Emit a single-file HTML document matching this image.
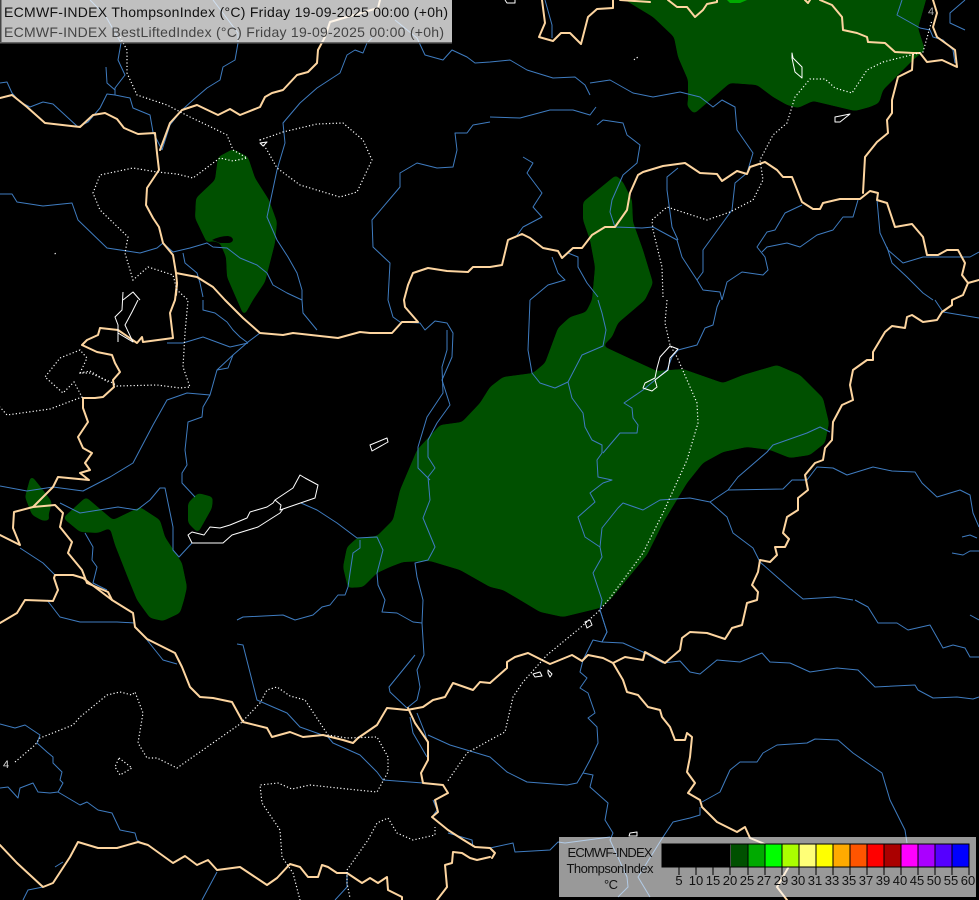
<!DOCTYPE html>
<html lang="en">
<head>
<meta charset="utf-8">
<title>ECMWF-INDEX ThompsonIndex</title>
<style>
html,body{margin:0;padding:0;background:#000;width:979px;height:900px;overflow:hidden}
svg{display:block;position:absolute;left:0;top:0}
text{font-family:"Liberation Sans",Arial,sans-serif}
.g{fill:#005000;stroke:none}
.r{fill:none;stroke:#3f7cc0;stroke-width:1;stroke-linejoin:round}
.b{fill:none;stroke:#fdd5a0;stroke-width:2;stroke-linejoin:round;stroke-linecap:round}
.d{fill:none;stroke:#fff;stroke-width:1.2;stroke-dasharray:1.2 2.2;stroke-linecap:butt}
.l{fill:none;stroke:#fff;stroke-width:1;stroke-linejoin:round}
</style>
</head>
<body>
<svg width="979" height="900" viewBox="0 0 979 900" xmlns="http://www.w3.org/2000/svg">
<defs>
<filter id="sm" filterUnits="userSpaceOnUse" x="0" y="-20" width="979" height="940" color-interpolation-filters="sRGB">
<feGaussianBlur stdDeviation="2.2"/>
<feColorMatrix type="matrix" values="1 0 0 0 0 0 1 0 0 0 0 0 1 0 0 0 0 0 14 -6.5"/>
</filter>
</defs>
<rect width="979" height="900" fill="#000"/>
<!-- green fields -->
<g filter="url(#sm)">
<path class="g" d="M612 -10L625 0L653 17L674 37L678 57L688 80L688 100L687 106L694 114L730 83L757 85L773 97L787 105L798 108L813 101L855 111L870 107L879 103L883 90L913 60L925 50L918 28L926 0L928 -10Z"/>
<path class="g" d="M233 149L248 157L255 178L269 200L277 222L275 243L265 282L253 300L244 316L237 300L227 277L226 257L220 243L212 241L207 243L195 218L196 198L215 180L218 157Z"/>
<path class="g" d="M616 175L623 182L632 200L633 222L643 250L653 283L645 300L618 323L612 337L603 346L633 360L657 371L683 369L723 383L743 375L777 365L800 375L823 398L829 423L825 443L810 455L790 458L770 450L747 447L723 452L703 463L687 483L663 523L647 555L610 600L600 608L563 617L540 612L520 600L503 590L490 587L460 570L430 561L403 562L390 567L377 573L363 587L348 588L343 567L347 547L357 538L377 536L393 520L400 490L417 450L440 425L462 422L480 403L490 387L503 377L533 373L545 363L558 328L570 317L586 312L592 300L595 267L590 240L583 220L583 202Z"/>
<path class="g" d="M31 475L43 490L52 502L48 517L52 520L43 521L32 515L25 497Z"/>
<path class="g" d="M63 518L86 497L113 520L140 507L160 520L165 537L182 563L187 587L184 600L180 613L163 621L150 618L137 600L128 578L115 545L110 528L98 533L80 532Z"/>
<path class="g" d="M198 493L213 497L212 508L198 533L188 523L188 503Z"/>
</g>
<path d="M727 0H747L740 3H730Z" fill="#00aa00"/>
<path d="M212 240Q220 236 228 236Q233 237 233 240Q232 243 228 243H220Z" fill="#000"/>
<!-- rivers -->
<g class="r">
<path d="M0 83L7 82L12 93L20 102L30 107L43 102L53 104L78 127L88 122L100 108L107 94L115 95L115 88L125 75L118 60L121 43L105 15L90 0"/>
<path d="M106 67L107 83L115 90M115 95L130 98L133 108L150 115L153 132L162 150"/>
<path d="M213 0L238 33L238 43L235 60L223 67L220 80L207 88L193 100L182 110L170 125L162 150"/>
<path d="M372 38L367 43L363 53L355 50L347 55L340 73L317 88L300 103L283 123L285 143L277 170L270 203L267 217L277 240L288 257L297 273L302 290L302 300L303 313L317 330"/>
<path d="M267 273L273 285L287 293L302 300"/>
<path d="M0 194L12 194L17 202L43 206L72 203L78 220L107 248L140 253L157 248L163 243L173 252L190 248L207 243L213 247L227 248L240 258L257 265L267 273"/>
<path d="M183 253L185 263L197 273L200 283L203 297"/>
<path d="M490 122L473 125L467 133L455 133L457 150L453 167L437 168L417 163L400 173L400 187L372 220L373 247L390 263L388 300L393 317L400 322L420 323L425 330L435 321L447 323L453 333L452 357L442 380L450 405L437 423L428 440L428 457L435 468L428 477L430 500L423 518L435 547L428 560L415 563L417 577L423 600L422 623"/>
<path d="M447 330L447 350L442 367L443 393L433 408L427 417L418 447L418 468L430 480"/>
<path d="M395 20L417 38L425 55L443 60L452 50L467 57L475 63L490 62L510 60L527 70L553 78L575 77L585 85L590 95"/>
<path d="M590 83L610 80L633 93L653 97L680 92L700 97L713 107L722 100L735 107L737 130L753 153L747 173L735 183L732 210L703 250L703 272L697 280L703 290L720 292L722 300"/>
<path d="M490 117L520 118L550 110L573 110L590 115L596 107"/>
<path d="M597 125L603 120L623 123L627 135L640 145L637 163L623 175L612 200L610 212L615 227L642 228L653 227L677 240L682 257L697 280"/>
<path d="M523 157L533 163L527 173L542 193L533 207L542 217L523 227L515 238"/>
<path d="M678 168L667 177L667 190L672 227L678 240"/>
<path d="M802 205L785 213L775 230L767 232L757 247L765 257L768 270L763 275L742 272L727 282L722 300"/>
<path d="M858 200L853 217L843 217L833 230L817 235L800 247L787 243L767 247L762 252"/>
<path d="M877 200L880 233L888 250L903 263L923 257L960 257L970 257L979 252"/>
<path d="M887 247L892 263L907 277L923 293L933 300"/>
<path d="M552 257L558 273L565 280L548 285L530 300"/>
<path d="M568 253L578 257L578 267L587 283L598 297"/>
<path d="M902 0L897 15L920 28L930 30L933 37L943 40L953 50L955 63"/>
<path d="M965 0L950 13L950 23L965 30"/>
<path d="M545 0L552 25L552 38"/>
<path d="M530 300L528 350L532 373L540 383L555 388L568 382L582 355L603 346L606 330L602 313L598 300"/>
<path d="M568 382L572 398L583 413L585 427L592 440L602 445L602 453L597 460L598 477L612 480L603 483L590 493L595 502L578 517L585 537L600 547L602 557L593 573L602 600L600 610L607 632L602 642"/>
<path d="M603 453L620 433L637 433L638 425L633 418L632 408L624 403L643 390L667 370L672 357L678 350L697 345L705 328L713 325L717 307L720 300"/>
<path d="M600 547L602 528L618 508L623 503L643 510L660 500L690 498L710 502L728 490L738 477L767 452L773 445L807 433L820 427L830 432"/>
<path d="M728 490L783 489L792 480L807 480L817 467L833 468L847 475L873 467L892 471L915 472L922 483L937 497L960 490L970 495L973 513L979 527"/>
<path d="M710 502L727 517L733 533L753 548L760 562L777 577L792 590L803 599L835 597L853 600"/>
<path d="M962 537L970 535L977 538M952 553L963 555L970 551L979 551"/>
<path d="M935 300L943 312L979 318"/>
<path d="M0 486L27 491L53 487L83 491L110 477L133 463L153 425L167 400L187 393L210 395L217 370L233 355L248 342L260 333"/>
<path d="M210 395L203 407L202 417L188 422L185 450L187 465L182 473L182 483L195 497"/>
<path d="M167 343L183 343L203 337L230 347L248 343M233 355L228 368L217 370"/>
<path d="M203 300L203 310L215 313L227 322L233 330L240 337L248 343"/>
<path d="M60 503L80 513L118 507L137 510L150 500L160 488L165 488L173 527L173 550L179 557L192 543"/>
<path d="M85 533L93 547L92 560L97 567L93 583L107 590"/>
<path d="M20 548L43 563L55 575"/>
<path d="M301 503L317 510L337 523L357 538L377 537L383 550L377 573L378 585L385 600L382 612L397 613L413 622L422 623"/>
<path d="M360 540L360 548L353 553L350 573L348 587L345 595L338 595L330 605L322 607L313 615L295 620L283 615L243 617L237 620"/>
<path d="M47 600L60 617L80 622L117 622L135 623"/>
<path d="M147 640L163 660L177 664"/>
<path d="M422 623L424 655L417 670L420 687L417 700L407 708M415 655L389 687L390 692L407 708"/>
<path d="M410 717L413 733L427 757M417 713L425 733L428 745"/>
<path d="M428 735L450 745L490 757L507 772L527 782L567 785L577 783L583 773L590 760L598 743L597 727L588 718L595 713L588 693L580 688L587 678L580 672L583 660L593 640L602 642"/>
<path d="M583 773L593 775L590 787L608 803L605 820L613 833L610 840L627 877L628 887L618 897"/>
<path d="M600 610L607 632L602 642L623 643L643 652L663 663L680 661L690 672L700 674L717 660L740 662L762 653L770 662L790 663L810 672L837 668L858 670L875 687L915 685L918 690L933 698L957 697L973 699L979 697"/>
<path d="M855 600L868 607L878 623L897 623L908 630L930 625L943 648L953 645L965 648L970 657L979 657M970 615L979 620"/>
<path d="M702 802L720 792L730 770L740 762L757 762L763 753L777 745L807 743L815 739L838 740L853 753L882 773L890 800L905 830L907 843"/>
<path d="M700 807L700 815L690 818L673 822L663 837L638 877L650 897"/>
<path d="M490 848L513 843L515 852L550 850L558 842L565 843L610 837"/>
<path d="M0 724L15 728L25 725L40 735L37 743L47 752L53 757L53 763L62 772L60 780L63 783L58 792L80 805L87 802L98 810L112 813L120 830L135 833L137 840L145 845"/>
<path d="M0 788L8 787L18 798L20 788L33 783L38 792L50 793L58 792"/>
<path d="M237 644L243 645L257 700L273 707L287 713L300 727L328 737L333 743L360 755L377 772L383 780L423 783"/>
<path d="M23 900L28 890L43 887M55 867L63 862M217 872L202 900M335 900L347 887L347 873"/>
<path d="M433 800L437 810L432 817M448 833L472 840L473 847"/>
</g>
<!-- borders -->
<g class="b">
<path d="M0 98L12 95L27 107L45 123L80 127L93 115L105 113L117 119L124 128L138 134L155 133L157 153L159 170L147 188L146 205L153 218L159 227L163 243L173 255L176 273L197 277L213 287L225 300L243 318L260 333L283 335L293 333L338 338L360 332L370 333L392 333L402 322L418 322L405 307L404 300L408 285L413 273L428 268L447 271L468 272L473 267L490 267L502 265L508 240L522 234L530 238L543 248L558 251L562 258L573 248L582 248L592 235L605 227L615 227L627 210L630 193L638 175L643 172L663 166L685 163L700 173L717 174L722 181L737 171L747 174L750 167L765 162L777 170L783 177L792 177L802 202L813 209L820 209L823 203L840 199L860 199L870 191L878 193L877 200L887 203L895 227L912 224L923 237L927 255L938 255L947 250L958 250L965 263L962 275L968 283L979 280"/>
<path d="M968 283L963 295L952 300L952 305L942 312L937 320L923 322L912 315L907 317L905 328L892 326L885 332L873 352L873 360L867 360L853 370L850 385L853 400L842 405L833 422L832 440L825 448L823 460L815 463L805 475L808 490L798 498L798 510L787 517L783 533L789 539L785 547L775 547L777 555L770 562L760 560L758 572L752 585L758 592L757 600L747 603L742 625L732 628L725 639L707 633L690 632L682 638L680 650L665 663L645 652L643 660L625 657L613 663L603 658L588 655L582 661L572 655L550 664L528 653L515 657L507 662L507 668L490 683L480 682L473 690L453 683L445 697L433 700L423 707L407 710L387 708L377 725L358 738L353 743L343 740L323 735L303 737L290 732L272 737L267 728L243 722L232 702L213 698L200 697L190 687L182 667L175 653L147 639L135 627L133 613L112 600L83 578L73 575L55 575L54 578L58 590L53 601L25 600L17 613L0 623"/>
<path d="M408 708L415 723L428 742L428 760L421 773L423 783L443 785L448 793L435 800L438 812L432 817L448 830L462 839L475 847L490 848L495 853L492 858"/>
<path d="M490 857L477 860L470 858L462 853L453 852L452 863L445 865L447 887L437 900"/>
<path d="M0 845L17 863L43 887L53 883L70 857L78 842L98 848L117 848L138 842L148 845L173 863L185 856L197 865L208 860L217 870L240 867L267 885L277 878L290 864L300 867L308 877L318 877L322 865L328 867L337 873L347 873L362 883L370 878L378 883L387 877L388 890L402 897L402 900"/>
<path d="M318 50L325 37L330 22L347 17L378 8L380 0"/>
<path d="M318 50L317 63L308 72L297 75L283 90L272 93L265 97L260 107L240 115L230 109L218 115L197 105L182 110L170 123L160 150"/>
<path d="M542 0L545 23L539 37L553 41L561 33L570 33L581 44L588 17L597 9L613 8L613 0"/>
<path d="M620 0L650 2M668 0L677 7L687 7L695 17L703 10L707 4L717 2L717 0M805 0L808 3L810 0"/>
<path d="M820 0L832 5L842 17L843 30L857 33L867 37L868 42L885 43L895 52L913 53L920 53L927 62L942 60L957 67L955 50L937 37L933 27L937 13L933 0"/>
<path d="M913 53L912 70L898 77L892 100L892 113L887 120L888 133L877 142L865 157L863 193"/>
<path d="M177 283L175 300L170 313L173 338L143 342L142 337L137 343L118 330L100 328L98 335L87 340L82 345L97 352L112 355L115 363L120 372L113 380L114 387L103 397L95 398L83 398L83 408L88 422L78 437L83 448L92 453L85 463L90 470L80 473L89 480L58 477L53 487L33 507L14 512L13 528L20 545L0 535"/>
<path d="M33 507L55 505L63 513L60 527L72 542L68 553L82 570L87 583L108 592L112 600"/>
<path d="M176 273L177 283L176 295"/>
<path d="M613 663L623 680L627 692L638 695L648 707L660 710L662 717L670 727L675 740L685 740L687 733L692 737L690 757L687 772L695 783L688 793L700 800L702 807L717 822L737 832L745 827L750 838L767 845L785 855L790 862L788 868L777 887L787 900"/>
</g>
<!-- dotted contours -->
<g class="d">
<path d="M120 37L127 50L127 73L137 95L167 105L190 117L213 128L227 135L233 150L247 158L233 161L220 158L213 163L193 178L177 174L157 172L133 168L100 175L93 193L100 210L128 237L125 253L133 280L148 267L173 275L177 290L188 300L185 333L183 367L190 387L180 388L157 385L117 386L113 383L90 373L80 373L87 358L80 350L60 358L45 377L63 393L74 382L82 397L50 409L7 415L0 407"/>
<path d="M80 373L90 371L108 382"/>
<path d="M260 140L283 132L317 124L343 123L363 140L372 160L357 192L340 197L300 185L277 168L267 150Z"/>
<path d="M663 297L662 267L653 230L652 220L667 207L707 220L730 212L753 200L763 180L760 160L773 135L787 123L795 97L810 79L825 79L835 88L852 93L867 70L883 62L923 52L932 20"/>
<path d="M667 300L665 323L670 345L677 357L697 403L698 423L687 460L663 513L643 553L610 598L600 610L580 628L547 655L523 682L513 697L505 732L490 740L467 753L447 782"/>
<path d="M15 762L35 745L40 738L73 725L80 717L107 695L120 692L132 695L135 692L143 713L138 743L147 758L157 758L177 768L240 724L260 703L267 690L277 687L290 696L305 700L328 735L347 738L377 737L388 757L388 772L377 792L347 789L310 785L292 789L278 783L260 785L262 803L280 830L282 857L293 873L300 900"/>
<path d="M347 870L368 840L377 823L388 818L397 833L413 840L435 835L435 827"/>
<path d="M347 872L347 883L350 898"/>
<path d="M119 758L132 768L120 775L115 767Z"/>
<path d="M637 57L638 60M634 59L635 60M55 253L56 256"/>
</g>
<!-- lakes -->
<g class="l">
<path d="M192 532L204 535L210 527L220 528L230 525L247 518L250 512L267 507L273 503L275 500L293 488L300 475L305 478L318 485L315 498L283 509L280 513L258 527L232 535L223 543L192 543L188 535Z"/>
<path d="M275 500L281 505L280 510L283 509"/>
<path d="M370 445L387 438L388 442L372 451Z"/>
<path d="M123 292L122 310L115 317L118 325L118 342M138 300L132 312L125 325L133 342L118 333"/>
<path d="M123 300L133 292L140 300"/>
<path d="M670 346L678 349L670 358L668 370L655 380L657 387L652 391L643 388L645 383L655 378L657 368L660 357Z"/>
<path d="M792 53L793 58L802 67L802 78L795 72L792 58Z"/>
<path d="M835 117L850 114L840 122L835 122Z"/>
<path d="M505 0L507 3L515 3L515 0"/>
<path d="M585 622L590 620L592 625L587 628Z"/>
<path d="M533 674L540 672L542 676L535 677Z"/>
<path d="M548 670L552 674L550 677L548 673Z"/>
<path d="M630 833L637 832L637 836L629 836Z"/>
<path d="M260 143L267 142L263 146Z"/>
</g>
<text x="3" y="768" font-size="11" fill="#ddd">4</text>
<text x="928" y="15" font-size="11" fill="#aaa">4</text>
<!-- header label panel -->
<rect x="0" y="0" width="452" height="43" fill="#c0c0c0" style="mix-blend-mode:screen"/>
<rect x="0" y="0" width="1.5" height="43" fill="#444"/>
<rect x="0" y="42" width="452" height="1.5" fill="#666"/>
<text x="4" y="17" font-size="14" fill="#111" textLength="444" lengthAdjust="spacing">ECMWF-INDEX ThompsonIndex (°C) Friday 19-09-2025 00:00 (+0h)</text>
<text x="4" y="37" font-size="14" fill="#444" textLength="440" lengthAdjust="spacing">ECMWF-INDEX BestLiftedIndex (°C) Friday 19-09-2025 00:00 (+0h)</text>
<!-- legend -->
<rect x="559" y="837" width="417" height="60" fill="#999" style="mix-blend-mode:screen"/>
<g font-size="13" fill="#111" text-anchor="middle">
<text x="610" y="857" textLength="85" lengthAdjust="spacing">ECMWF-INDEX</text>
<text x="610" y="873" textLength="87" lengthAdjust="spacing">ThompsonIndex</text>
<text x="611" y="889" textLength="14" lengthAdjust="spacing">°C</text>
</g>
<g shape-rendering="crispEdges">
<rect x="662" y="844" width="68.5" height="23" fill="#000"/>
<rect x="731" y="844" width="17" height="23" fill="#005000"/>
<rect x="748" y="844" width="17" height="23" fill="#00aa00"/>
<rect x="765" y="844" width="17" height="23" fill="#00ff00"/>
<rect x="782" y="844" width="17" height="23" fill="#aaff00"/>
<rect x="799" y="844" width="17" height="23" fill="#ffff77"/>
<rect x="816" y="844" width="17" height="23" fill="#ffff00"/>
<rect x="833" y="844" width="17" height="23" fill="#ffaa00"/>
<rect x="850" y="844" width="17" height="23" fill="#ff5500"/>
<rect x="867" y="844" width="17" height="23" fill="#ff0000"/>
<rect x="884" y="844" width="17" height="23" fill="#aa0000"/>
<rect x="901" y="844" width="17" height="23" fill="#ff00ff"/>
<rect x="918" y="844" width="17" height="23" fill="#aa00ff"/>
<rect x="935" y="844" width="17" height="23" fill="#5500ff"/>
<rect x="952" y="844" width="17" height="23" fill="#0000ff"/>
<rect x="662" y="844" width="307" height="23" fill="none" stroke="#000" stroke-width="1"/>
<path fill="none" stroke="#000" stroke-width="1" d="M679 844V875M696 844V875M713 844V875M730 844V875M748 844V875M765 844V875M782 844V875M799 844V875M816 844V875M833 844V875M850 844V875M867 844V875M884 844V875M901 844V875M918 844V875M935 844V875M952 844V875M969 844V875"/>
</g>
<g font-size="13" fill="#111" text-anchor="middle">
<text x="679" y="885">5</text><text x="696" y="885">10</text><text x="713" y="885">15</text><text x="730" y="885">20</text>
<text x="747" y="885">25</text><text x="764" y="885">27</text><text x="781" y="885">29</text><text x="798" y="885">30</text>
<text x="815" y="885">31</text><text x="832" y="885">33</text><text x="849" y="885">35</text><text x="866" y="885">37</text>
<text x="883" y="885">39</text><text x="900" y="885">40</text><text x="917" y="885">45</text><text x="934" y="885">50</text>
<text x="951" y="885">55</text><text x="968" y="885">60</text>
</g>
</svg>
</body>
</html>
